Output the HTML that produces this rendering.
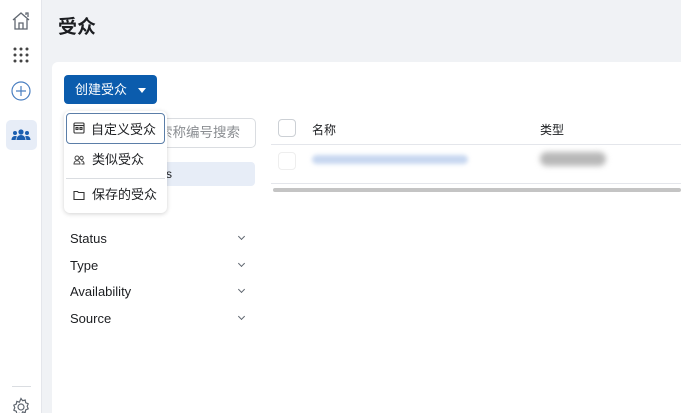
<!DOCTYPE html>
<html><head><meta charset="utf-8"><style>
*{box-sizing:border-box;margin:0;padding:0}
html,body{width:681px;height:413px;overflow:hidden}
body{background:#f0f2f5;font-family:"Liberation Sans","Noto Sans CJK SC",sans-serif;position:relative;color:#1c1e21}
.side{position:absolute;left:0;top:0;width:42px;height:413px;background:#fff;border-right:1px solid #e4e6eb}
.ic{position:absolute;left:10px}
h1{position:absolute;left:58px;top:12px;font-size:19px;font-weight:bold;color:#1c1e21}
.card{position:absolute;left:52px;top:62px;right:0;bottom:0;background:#fff;border-radius:6px 0 0 0}
.btn{position:absolute;left:64px;top:75px;width:93px;height:29px;background:#0b5cad;border-radius:4px;color:#fff;font-size:13px;line-height:29px;padding-left:11px}
.btn:after{content:"";position:absolute;right:11px;top:13px;border:4px solid transparent;border-top:5px solid #fff}
.search{position:absolute;left:150px;top:118px;width:106px;height:30px;border:1px solid #dadde1;border-radius:5px;font-size:13.5px;color:#8a8d91;line-height:28px;padding-left:8px;white-space:nowrap;overflow:hidden}
.sel{position:absolute;left:64px;top:162px;width:191px;height:24px;background:#e7edf7;border-radius:4px;font-size:12px;line-height:24px;padding-left:102px;color:#1c1e21}
.dd{position:absolute;left:64px;top:111px;width:103px;height:102px;background:#fff;border-radius:6px;box-shadow:0 1px 5px rgba(0,0,0,.18)}
.it{position:absolute;left:2px;width:99px;height:31px;font-size:13px;line-height:31px;padding-left:26px;color:#1c1e21}
.f{position:absolute;left:70px;font-size:13px;color:#1c1e21}
.chev{position:absolute;left:239px;width:5px;height:5px;border-right:1.2px solid #606770;border-bottom:1.2px solid #606770;transform:rotate(45deg)}
.cb{position:absolute;left:278px;width:18px;height:18px;border:1px solid #ccd0d5;border-radius:4px;background:#fff}
.th{position:absolute;top:121px;font-size:12px;color:#1c1e21}
</style></head><body>
<div class="side">
<svg class="ic" style="top:10px" width="22" height="22" viewBox="0 0 22 22" fill="none" stroke="#606770" stroke-width="1.3"><path d="M3 10 L11 3 L19 10 M5 9 V19 H17 V9 M9 19 V13 H13 V19"/><path d="M16 5 V3 H18 V7"/></svg>
<svg class="ic" style="top:44px" width="22" height="22" viewBox="0 0 22 22" fill="#444"><circle cx="5" cy="5" r="1.5"/><circle cx="11" cy="5" r="1.5"/><circle cx="17" cy="5" r="1.5"/><circle cx="5" cy="11" r="1.5"/><circle cx="11" cy="11" r="1.5"/><circle cx="17" cy="11" r="1.5"/><circle cx="5" cy="17" r="1.5"/><circle cx="11" cy="17" r="1.5"/><circle cx="17" cy="17" r="1.5"/></svg>
<svg class="ic" style="top:80px" width="22" height="22" viewBox="0 0 22 22" fill="none" stroke="#4a7fc1" stroke-width="1.2"><circle cx="11" cy="11" r="9"/><path d="M11 6V16M6 11H16"/></svg>
<div style="position:absolute;left:6px;top:120px;width:31px;height:30px;background:#e7edf7;border-radius:5px"></div>
<svg class="ic" style="top:124px" width="22" height="22" viewBox="0 0 22 22" fill="#1c5fb0"><circle cx="11" cy="8" r="2.6"/><circle cx="5" cy="9" r="2"/><circle cx="17" cy="9" r="2"/><path d="M6.5 16c0-3 2-5 4.5-5s4.5 2 4.5 5z"/><path d="M1.5 16c0-2.5 1.5-4 3.5-4 1 0 1.5.3 2 .7-1 1-1.3 2-1.3 3.3z"/><path d="M20.5 16c0-2.5-1.5-4-3.5-4-1 0-1.5.3-2 .7 1 1 1.3 2 1.3 3.3z"/></svg>
<div style="position:absolute;left:12px;top:386px;width:19px;border-top:1px solid #dadde1"></div>
<svg class="ic" style="top:396px" width="22" height="22" viewBox="0 0 22 22" fill="none" stroke="#606770" stroke-width="1.2"><circle cx="11" cy="11" r="3"/><path d="M11 2.5l1.6 2.2 2.6-.7.5 2.7 2.5 1.1-1 2.5 1 2.5-2.5 1.1-.5 2.7-2.6-.7L11 19.5l-1.6-2.2-2.6.7-.5-2.7-2.5-1.1 1-2.5-1-2.5 2.5-1.1.5-2.7 2.6.7z"/></svg>
</div>
<h1>受众</h1>
<div class="card"></div>
<div class="btn">创建受众</div>
<div class="search">索称编号搜索</div>
<div class="sel">s</div>
<div class="dd">
<div class="it" style="top:2px;border:1.5px solid #5b7ea8;border-radius:4px;padding-left:24px">自定义受众</div>
<svg style="position:absolute;left:9px;top:11px" width="12" height="12" viewBox="0 0 12 12" fill="none" stroke="#333" stroke-width="1.1"><rect x="1" y="1" width="10" height="10" rx="1"/><path d="M1 3.5H11"/><rect x="3" y="5.5" width="2" height="2"/><rect x="7" y="5.5" width="2" height="2"/></svg>
<div class="it" style="top:33px">类似受众</div>
<svg style="position:absolute;left:9px;top:43px" width="12" height="12" viewBox="0 0 12 12" fill="none" stroke="#444" stroke-width="1"><circle cx="4" cy="4" r="2"/><path d="M1 10c0-2 1.3-3.3 3-3.3s3 1.3 3 3.3z"/><circle cx="8.5" cy="4" r="1.7"/><path d="M8 6.8c2 0 3 1.3 3 3.2H8.5"/></svg>
<div style="position:absolute;left:2px;right:2px;top:67px;border-top:1px solid #dadde1"></div>
<div class="it" style="top:68px">保存的受众</div>
<svg style="position:absolute;left:9px;top:78px" width="12" height="12" viewBox="0 0 12 12" fill="none" stroke="#333" stroke-width="1.1"><path d="M1 2.5H4.5L5.5 3.5H11V10.5H1Z"/></svg>
</div>
<div class="f" style="top:231px">Status</div><div class="chev" style="top:234px"></div>
<div class="f" style="top:258px">Type</div><div class="chev" style="top:261px"></div>
<div class="f" style="top:284px">Availability</div><div class="chev" style="top:287px"></div>
<div class="f" style="top:311px">Source</div><div class="chev" style="top:314px"></div>
<div class="cb" style="top:119px"></div>
<div class="th" style="left:312px">名称</div>
<div class="th" style="left:540px">类型</div>
<div style="position:absolute;left:271px;right:0;top:144px;border-top:1px solid #e4e6eb"></div>
<div class="cb" style="top:152px;border-color:#eee"></div>
<div style="position:absolute;left:312px;top:155px;width:156px;height:9px;background:#c7d7f0;border-radius:5px;filter:blur(2px)"></div>
<div style="position:absolute;left:540px;top:152px;width:66px;height:14px;background:#b8b8b8;border-radius:7px;filter:blur(3px)"></div>
<div style="position:absolute;left:271px;right:0;top:183px;border-top:1px solid #e4e6eb"></div>
<div style="position:absolute;left:273px;right:0;top:188px;height:4px;background:#c4c4c4;border-radius:2px"></div>
</body></html>
